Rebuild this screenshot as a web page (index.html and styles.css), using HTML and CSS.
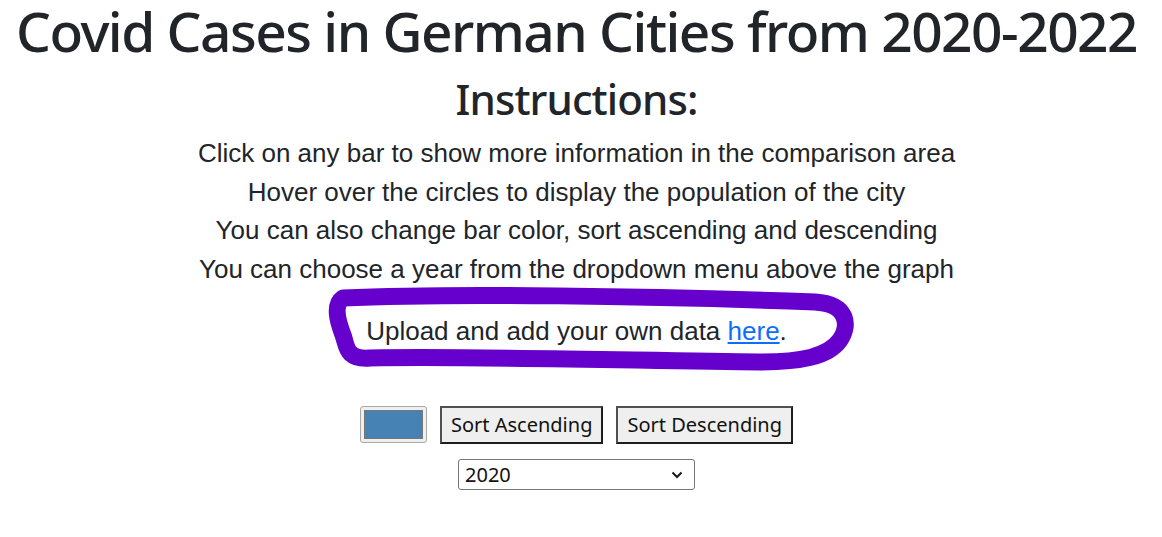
FILE: index.html
```html
<!DOCTYPE html>
<html lang="en">
<head>
<meta charset="utf-8">
<title>Covid Cases in German Cities</title>
<link rel="stylesheet" href="styles.css">
</head>
<body>
<main class="page">
  <h1 class="title">Covid Cases in German Cities from 2020-2022</h1>
  <h2 class="subtitle">Instructions:</h2>
  <div class="instructions">
    <p>Click on any bar to show more information in the comparison area</p>
    <p>Hover over the circles to display the population of the city</p>
    <p>You can also change bar color, sort ascending and descending</p>
    <p>You can choose a year from the dropdown menu above the graph</p>
  </div>
  <p class="upload">Upload and add your own data <a href="#">here</a>.</p>
  <div class="controls">
    <input class="color-pick" type="color" value="#4682b4">
    <button class="btn" type="button">Sort Ascending</button>
    <button class="btn" type="button">Sort Descending</button>
  </div>
  <div class="select-wrap">
    <select class="year">
      <option>2020</option>
      <option>2021</option>
      <option>2022</option>
    </select>
    <svg class="chevron" width="12" height="8" viewBox="0 0 12 8"><path d="M1.5 1.5 L6 6 L10.5 1.5" fill="none" stroke="#1a1a1a" stroke-width="2"/></svg>
  </div>
  <svg class="scribble" width="1162" height="537" viewBox="0 0 1162 537">
    <path d="M 343 298 C 450 293, 650 296, 815 302 C 848 304, 850 325, 840 340 C 828 357, 800 362, 760 362 C 650 361, 480 356, 370 358 C 345 360, 347 345, 343 335 C 338 322, 333 305, 343 298 Z" fill="none" stroke="#6600cc" stroke-width="17" stroke-linejoin="round" stroke-linecap="round"/>
  </svg>
</main>
</body>
</html>
```

FILE: styles.css
```css
html, body {
  margin: 0;
  padding: 0;
  background: #ffffff;
}

.page {
  position: relative;
  display: flex;
  flex-direction: column;
  align-items: center;
  padding-right: 9px;
  text-align: center;
  color: #212529;
  font-family: "Noto Sans", "Open Sans", sans-serif;
}

.title {
  margin: 0;
  font-size: 55px;
  font-weight: 500;
  line-height: 61px;
  letter-spacing: -1.5px;
  white-space: nowrap;
}

.subtitle {
  margin: 13px 0 0;
  font-size: 42px;
  font-weight: 500;
  line-height: 50px;
  letter-spacing: -0.9px;
}

.instructions {
  margin-top: 10px;
  font-family: "Liberation Sans", Arial, sans-serif;
  font-size: 26px;
  line-height: 38.5px;
}

.instructions p {
  margin: 0;
}

.upload {
  margin: 24px 0 0;
  font-family: "Liberation Sans", Arial, sans-serif;
  font-size: 26px;
  line-height: 38.5px;
}

.upload a {
  color: #0d6efd;
  text-decoration: underline;
}

.controls {
  margin-top: 55px;
  display: flex;
  align-items: center;
  gap: 13px;
}

.color-pick {
  box-sizing: border-box;
  width: 67px;
  height: 37px;
  padding: 3px;
  border: 1px solid #a9a9a9;
  border-radius: 3px;
  background: #efefef;
  cursor: pointer;
}

.color-pick::-webkit-color-swatch-wrapper {
  padding: 0;
}

.color-pick::-webkit-color-swatch {
  border: 1px solid #777777;
  border-radius: 0;
}

.btn {
  box-sizing: border-box;
  height: 38px;
  padding: 0 9px;
  font-family: "Noto Sans", "Open Sans", sans-serif;
  font-size: 20px;
  color: #111111;
  background: #efefef;
  border-style: solid;
  border-width: 2px;
  border-color: #505050 #1e1e1e #1e1e1e #505050;
  border-radius: 0;
}

.select-wrap {
  position: relative;
  margin-top: 15px;
}

.year {
  box-sizing: border-box;
  width: 237px;
  height: 31px;
  padding: 0 6px;
  -webkit-appearance: none;
  appearance: none;
  font-family: "Noto Sans", "Open Sans", sans-serif;
  font-size: 20px;
  color: #111111;
  background: #ffffff;
  border: 1px solid #767676;
  border-radius: 3px;
}

.chevron {
  position: absolute;
  right: 12px;
  top: 12px;
  pointer-events: none;
}

.scribble {
  position: absolute;
  top: 0;
  left: 0;
  pointer-events: none;
}
```
